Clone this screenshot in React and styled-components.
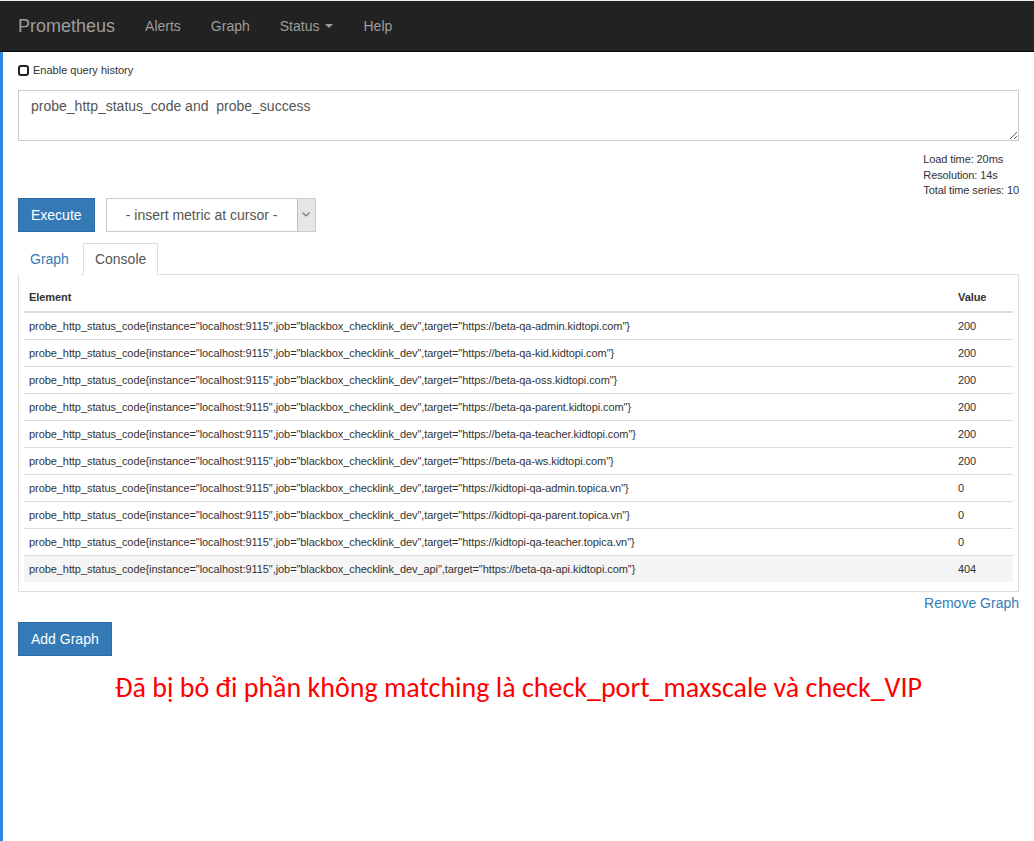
import styled, { createGlobalStyle } from "styled-components";

const GlobalStyle = createGlobalStyle`
  html, body {
    margin: 0;
    padding: 0;
    background: #fff;
  }
  body {
    font-family: "Liberation Sans", Arial, Helvetica, sans-serif;
    font-size: 14px;
    color: #333;
  }
`;

const rows = [
  ["blackbox_checklink_dev", "https://beta-qa-admin.kidtopi.com", "200"],
  ["blackbox_checklink_dev", "https://beta-qa-kid.kidtopi.com", "200"],
  ["blackbox_checklink_dev", "https://beta-qa-oss.kidtopi.com", "200"],
  ["blackbox_checklink_dev", "https://beta-qa-parent.kidtopi.com", "200"],
  ["blackbox_checklink_dev", "https://beta-qa-teacher.kidtopi.com", "200"],
  ["blackbox_checklink_dev", "https://beta-qa-ws.kidtopi.com", "200"],
  ["blackbox_checklink_dev", "https://kidtopi-qa-admin.topica.vn", "0"],
  ["blackbox_checklink_dev", "https://kidtopi-qa-parent.topica.vn", "0"],
  ["blackbox_checklink_dev", "https://kidtopi-qa-teacher.topica.vn", "0"],
  ["blackbox_checklink_dev_api", "https://beta-qa-api.kidtopi.com", "404"],
];

const TopLine = styled.div`
  height: 1px;
  background: #eef1f4;
`;

const Navbar = styled.nav`
  height: 50px;
  background: #222;
  border-bottom: 1px solid #080808;
  display: flex;
  align-items: center;
  padding-left: 3px;
`;

const Brand = styled.span`
  font-size: 18px;
  color: #9d9d9d;
  padding: 0 15px;
  line-height: 50px;
`;

const NavLink = styled.span`
  font-size: 14px;
  color: #9d9d9d;
  padding: 0 15px;
  line-height: 50px;
  display: flex;
  align-items: center;
`;

const Caret = styled.span`
  display: inline-block;
  margin-left: 6px;
  width: 0;
  height: 0;
  border-top: 4px solid #9d9d9d;
  border-left: 4px solid transparent;
  border-right: 4px solid transparent;
`;

const Main = styled.main`
  border-left: 3px solid #2b8ae2;
  padding: 11px 15px 0 15px;
  min-height: calc(100vh - 63px);
`;

const CheckRow = styled.label`
  display: flex;
  align-items: center;
  font-size: 11px;
  color: #333;
  height: 14px;
`;

const CheckBox = styled.span`
  width: 7px;
  height: 7px;
  border: 2px solid #222;
  border-radius: 3px;
  margin-right: 4px;
  margin-top: 1px;
`;

const QueryArea = styled.textarea`
  display: block;
  box-sizing: border-box;
  width: 100%;
  height: 51px;
  margin-top: 13px;
  padding: 5px 12px;
  border: 1px solid #ccc;
  font-family: "Liberation Sans", Arial, sans-serif;
  font-size: 14px;
  line-height: 20px;
  color: #555;
  resize: vertical;
  outline: none;
`;

const StatsWrap = styled.div`
  display: flex;
  justify-content: flex-end;
  margin-top: 11px;
`;

const Stats = styled.div`
  text-align: left;
  font-size: 11px;
  line-height: 15.5px;
  color: #333;
  letter-spacing: -0.1px;
`;

const Controls = styled.div`
  display: flex;
  gap: 11px;
  margin-top: -1px;
`;

const Button = styled.button`
  height: 34px;
  padding: 0 12px;
  background: #337ab7;
  border: 1px solid #2e6da4;
  color: #fff;
  font-family: "Liberation Sans", Arial, sans-serif;
  font-size: 14px;
  border-radius: 0;
  cursor: pointer;
`;

const Select = styled.div`
  width: 210px;
  height: 34px;
  box-sizing: border-box;
  border: 1px solid #ccc;
  display: flex;
  font-size: 14px;
  color: #555;
`;

const SelectLabel = styled.span`
  flex: 1;
  text-align: center;
  line-height: 32px;
`;

const SelectArrow = styled.span`
  width: 17px;
  background: #e6e6e6;
  border-left: 1px solid #bdbdbd;
  display: flex;
  align-items: center;
  justify-content: center;
`;

const Tabs = styled.div`
  display: flex;
  margin-top: 11px;
  border-bottom: 1px solid #ddd;
`;

const Tab = styled.span`
  padding: 6px 11px 5px 11px;
  margin-right: 2px;
  line-height: 19px;
  font-size: 14px;
  color: ${(p) => (p.$active ? "#555" : "#337ab7")};
  border: 1px solid ${(p) => (p.$active ? "#ddd" : "transparent")};
  border-bottom-color: ${(p) => (p.$active ? "#fff" : "transparent")};
  margin-bottom: -1px;
  background: #fff;
`;

const Panel = styled.div`
  border: 1px solid #ddd;
  border-top: none;
  padding: 9px 5px 9px 5px;
`;

const Table = styled.table`
  width: 100%;
  border-collapse: collapse;
  font-size: 11px;
  letter-spacing: -0.07px;
`;

const Th = styled.th`
  text-align: left;
  font-weight: bold;
  padding: 6px 5px;
  line-height: 15px;
  border-bottom: 2px solid #ddd;
  width: ${(p) => p.$w || "auto"};
`;

const Tr = styled.tr`
  background: ${(p) => (p.$hover ? "#f5f5f5" : "transparent")};
  border-bottom: ${(p) => (p.$hover ? "none" : "1px solid #ddd")};
`;

const Td = styled.td`
  padding: 5px;
  line-height: 16px;
  white-space: nowrap;
`;

const RemoveRow = styled.div`
  text-align: right;
  margin-top: 1px;
  line-height: 20px;
  color: #337ab7;
  font-size: 14px;
`;

const AddRow = styled.div`
  margin-top: 9px;
`;

const Note = styled.p`
  margin: 12px 0 0 0;
  text-align: center;
  color: #ff0000;
  font-family: Carlito, Calibri, Lato, "Noto Sans", sans-serif;
  font-size: 28px;
  line-height: 40px;
`;

export default function App() {
  return (
    <>
      <GlobalStyle />
      <TopLine />
      <Navbar>
        <Brand>Prometheus</Brand>
        <NavLink>Alerts</NavLink>
        <NavLink>Graph</NavLink>
        <NavLink>
          Status<Caret />
        </NavLink>
        <NavLink>Help</NavLink>
      </Navbar>
      <Main>
        <CheckRow>
          <CheckBox />
          Enable query history
        </CheckRow>
        <QueryArea defaultValue="probe_http_status_code and  probe_success" />
        <StatsWrap>
          <Stats>
            <div>Load time: 20ms</div>
            <div>Resolution: 14s</div>
            <div>Total time series: 10</div>
          </Stats>
        </StatsWrap>
        <Controls>
          <Button>Execute</Button>
          <Select>
            <SelectLabel>- insert metric at cursor -</SelectLabel>
            <SelectArrow>
              <svg width="8" height="5" viewBox="0 0 8 5">
                <path d="M0.5 0.5 L4 4 L7.5 0.5" fill="none" stroke="#777" strokeWidth="1.2" />
              </svg>
            </SelectArrow>
          </Select>
        </Controls>
        <Tabs>
          <Tab>Graph</Tab>
          <Tab $active>Console</Tab>
        </Tabs>
        <Panel>
          <Table>
            <thead>
              <tr>
                <Th>Element</Th>
                <Th $w="50px">Value</Th>
              </tr>
            </thead>
            <tbody>
              {rows.map(([job, target, value], i) => (
                <Tr key={target} $hover={i === rows.length - 1}>
                  <Td>
                    {`probe_http_status_code{instance="localhost:9115",job="${job}",target="${target}"}`}
                  </Td>
                  <Td>{value}</Td>
                </Tr>
              ))}
            </tbody>
          </Table>
        </Panel>
        <RemoveRow>Remove Graph</RemoveRow>
        <AddRow>
          <Button>Add Graph</Button>
        </AddRow>
        <Note>Đã bị bỏ đi phần không matching là check_port_maxscale và check_VIP</Note>
      </Main>
    </>
  );
}
